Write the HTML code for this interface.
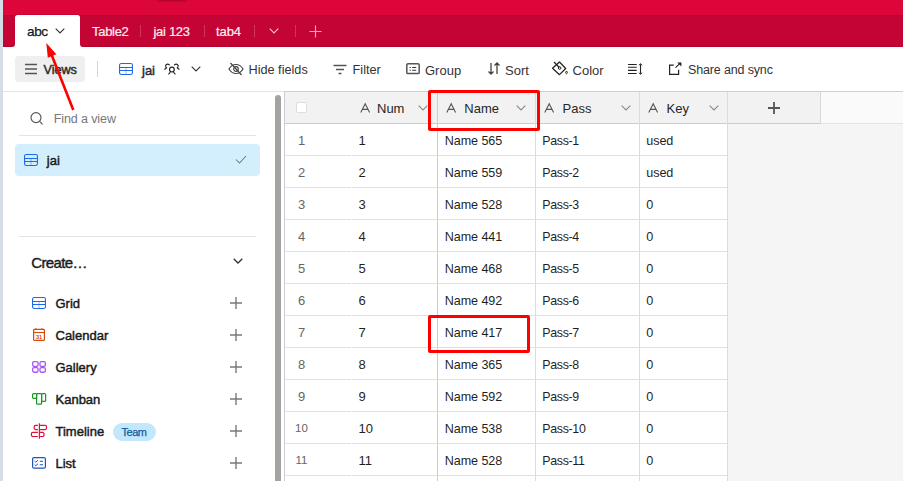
<!DOCTYPE html>
<html><head><meta charset="utf-8"><style>
html,body{margin:0;padding:0;}
body{width:903px;height:481px;overflow:hidden;position:relative;background:#fff;font-family:"Liberation Sans",sans-serif;}
.t{position:absolute;line-height:1;white-space:nowrap;}
.r{position:absolute;box-sizing:content-box;}
svg.r{overflow:visible;}
</style></head><body>
<div class="r" style="left:0px;top:0px;width:903px;height:15px;background:#dd063b;"></div>
<div class="r" style="left:0px;top:15px;width:903px;height:32px;background:#fff;"></div>
<div class="r" style="left:10px;top:15px;width:75px;height:8px;background:#c40434;"></div>
<div class="r" style="left:0px;top:15px;width:15px;height:32px;background:linear-gradient(#c40434 0,#c40434 30px,#b0002a 32px);border-radius:0 0 3px 0;"></div>
<div class="r" style="left:80px;top:15px;width:823px;height:32px;background:linear-gradient(#c40434 0,#c40434 30px,#b0002a 32px);border-radius:0 0 0 3px;"></div>
<div class="r" style="left:0px;top:0px;width:3px;height:481px;background:#d5dde6;"></div>
<div class="r" style="left:157px;top:-3px;width:30px;height:3.5px;background:#a8002c;border-radius:3px;filter:blur(0.8px);"></div>
<div class="r" style="left:3px;top:15px;width:900px;height:1px;background:rgba(150,0,30,0.25);"></div>
<div class="r" style="left:15px;top:14px;width:65px;height:1px;background:rgba(150,0,30,0.3);"></div>
<div class="r" style="left:15px;top:15px;width:65px;height:32px;background:#fff;border-radius:2.5px 2.5px 0 0;"></div>
<div class="t" style="left:27px;top:24.99px;font-size:13.6px;color:#0f172a;font-weight:400;letter-spacing:-0.4px;-webkit-text-stroke:0.25px #0f172a;">abc</div>
<svg class="r" style="left:55px;top:28px" width="10" height="6" viewBox="0 0 10 6"><path d="M0.7 0.7 L5 5 L9.3 0.7" fill="none" stroke="#333" stroke-width="1.1"/></svg>
<div class="t" style="left:92px;top:24.70px;font-size:13px;color:#fdeef2;font-weight:400;letter-spacing:-0.3px;-webkit-text-stroke:0.2px #fdeef2;">Table2</div>
<div class="r" style="left:140px;top:25px;width:1px;height:12px;background:rgba(255,255,255,0.2);"></div>
<div class="t" style="left:153.5px;top:24.70px;font-size:13px;color:#fdeef2;font-weight:400;letter-spacing:-0.3px;-webkit-text-stroke:0.2px #fdeef2;">jai 123</div>
<div class="r" style="left:204px;top:25px;width:1px;height:12px;background:rgba(255,255,255,0.2);"></div>
<div class="t" style="left:216px;top:24.70px;font-size:13px;color:#fdeef2;font-weight:400;letter-spacing:-0.1px;-webkit-text-stroke:0.2px #fdeef2;">tab4</div>
<div class="r" style="left:254px;top:25px;width:1px;height:12px;background:rgba(255,255,255,0.2);"></div>
<svg class="r" style="left:269px;top:28px" width="10" height="6" viewBox="0 0 10 6"><path d="M0.7 0.7 L5 5 L9.3 0.7" fill="none" stroke="#f5c6d2" stroke-width="1.1"/></svg>
<div class="r" style="left:295px;top:25px;width:1px;height:12px;background:rgba(255,255,255,0.2);"></div>
<svg class="r" style="left:309px;top:25px" width="13" height="13" viewBox="0 0 13 13"><path d="M6.5 0.5 V12.5 M0.5 6.5 H12.5" fill="none" stroke="#f0a9bb" stroke-width="1.2"/></svg>
<div class="r" style="left:3px;top:47px;width:900px;height:44px;background:#fff;"></div>
<div class="r" style="left:3px;top:91px;width:900px;height:1px;background:#e6e6e6;"></div>
<div class="r" style="left:15px;top:56px;width:70px;height:26px;background:#efefef;border-radius:4px;"></div>
<svg class="r" style="left:25px;top:63px" width="12" height="12" viewBox="0 0 12 12"><path d="M0 1.5 H12 M0 6 H12 M0 10.5 H12" stroke="#555" stroke-width="1.6"/></svg>
<div class="t" style="left:43.6px;top:63.95px;font-size:12.7px;color:#2a2a2a;font-weight:400;letter-spacing:-0.1px;-webkit-text-stroke:0.45px #2a2a2a;">Views</div>
<div class="r" style="left:97px;top:61px;width:1px;height:16px;background:#d4d4d4;"></div>
<svg class="r" style="left:119px;top:63px" width="14" height="12" viewBox="0 0 14 12"><rect x="0.55" y="0.55" width="12.9" height="10.9" rx="1.6" fill="none" stroke="#1f6ae6" stroke-width="1.1"/><path d="M0.6 4.5 H13.4 M0.6 7.5 H13.4" stroke="#1f6ae6" stroke-width="1.0"/><path d="M7 4.5 V11.4" stroke="#1f6ae6" stroke-width="0.8" opacity="0.55"/></svg>
<div class="t" style="left:142px;top:63.70px;font-size:13px;color:#2a2a2a;font-weight:400;letter-spacing:0px;-webkit-text-stroke:0.45px #2a2a2a;">jai</div>
<svg class="r" style="left:162px;top:60px" width="20" height="18" viewBox="0 0 20 18"><circle cx="9.9" cy="9.55" r="2.4" fill="none" stroke="#222" stroke-width="1.15"/><path d="M8.4 12.2 L6.4 14.4 M11.4 12.2 L13.4 14.4" fill="none" stroke="#222" stroke-width="1.1"/><path d="M7.5 5.4 C7.3 3.8 4.2 3.6 3.7 5.5 C3.5 6.5 4 7.5 4.5 7.9 L2.4 9.5" fill="none" stroke="#222" stroke-width="1.1"/><path d="M12.3 5.4 C12.5 3.8 15.6 3.6 16.1 5.5 C16.3 6.5 15.8 7.5 15.3 7.9 L17.4 9.5" fill="none" stroke="#222" stroke-width="1.1"/></svg>
<svg class="r" style="left:191px;top:66px" width="10" height="6" viewBox="0 0 10 6"><path d="M0.7 0.7 L5 5 L9.3 0.7" fill="none" stroke="#333" stroke-width="1.1"/></svg>
<svg class="r" style="left:228px;top:62px" width="16" height="14" viewBox="0 0 16 14"><path d="M1 7 C3 3.5 5.5 2.5 8 2.5 C10.5 2.5 13 3.5 15 7 C13 10.5 10.5 11.5 8 11.5 C5.5 11.5 3 10.5 1 7 Z" fill="none" stroke="#444" stroke-width="1.2"/><circle cx="8" cy="7" r="2.3" fill="none" stroke="#444" stroke-width="1.2"/><path d="M2.5 1 L13.5 13" stroke="#444" stroke-width="1.2"/></svg>
<div class="t" style="left:248.5px;top:63.95px;font-size:12.7px;color:#333;font-weight:400;letter-spacing:0px;">Hide fields</div>
<svg class="r" style="left:333px;top:64px" width="14" height="11" viewBox="0 0 14 11"><path d="M0.5 1.5 H13.5 M3 5.5 H11 M5.5 9.5 H8.5" stroke="#555" stroke-width="1.3"/></svg>
<div class="t" style="left:352.6px;top:63.95px;font-size:12.7px;color:#333;font-weight:400;letter-spacing:0px;">Filter</div>
<svg class="r" style="left:406px;top:63px" width="14" height="12" viewBox="0 0 14 12"><rect x="0.8" y="0.8" width="12.4" height="9.8" rx="1.2" fill="none" stroke="#555" stroke-width="1.5"/><path d="M3.6 4.5 H4.8 M6.2 4.5 H10.2 M3.6 7.3 H4.8 M6.2 7.3 H10.2" stroke="#333" stroke-width="1.1"/></svg>
<div class="t" style="left:425px;top:63.70px;font-size:13px;color:#333;font-weight:400;letter-spacing:0px;">Group</div>
<svg class="r" style="left:487px;top:62px" width="14" height="13" viewBox="0 0 14 13"><path d="M4 1 V12 M1.5 9.5 L4 12 L6.5 9.5 M10 12 V1 M7.5 3.5 L10 1 L12.5 3.5" fill="none" stroke="#444" stroke-width="1.3"/></svg>
<div class="t" style="left:505px;top:63.70px;font-size:13px;color:#333;font-weight:400;letter-spacing:0px;">Sort</div>
<svg class="r" style="left:552px;top:61px" width="16" height="15" viewBox="0 0 16 15"><path d="M7.5 1 L13.7 7.5 L7.5 13.7 L0.5 7.2 Z" fill="none" stroke="#222" stroke-width="1.2" stroke-linejoin="round"/><path d="M2 1 L7.3 6.5" stroke="#222" stroke-width="1.2"/><circle cx="7.6" cy="7" r="1.3" fill="none" stroke="#222" stroke-width="1"/><path d="M14.5 10 C13.5 11.3 13.2 12 14.5 12.8 C15.8 12 15.5 11.3 14.5 10 Z" fill="none" stroke="#222" stroke-width="1"/></svg>
<div class="t" style="left:572.6px;top:63.70px;font-size:13px;color:#333;font-weight:400;letter-spacing:0px;">Color</div>
<svg class="r" style="left:628px;top:63px" width="15" height="12" viewBox="0 0 15 12"><path d="M0 1.5 H8.7 M0 4.3 H8.7 M0 7.4 H8.7 M0 10.5 H8.7" stroke="#222" stroke-width="1.1"/><path d="M12.5 1.2 V10.8" stroke="#222" stroke-width="1.1"/><path d="M11 2.3 L12.5 0.6 L14 2.3 M11 9.7 L12.5 11.4 L14 9.7" fill="none" stroke="#222" stroke-width="1"/></svg>
<svg class="r" style="left:669px;top:62px" width="13" height="13" viewBox="0 0 13 13"><path d="M4.8 3.2 H0.6 V12.4 H9.6 V7.7" fill="none" stroke="#222" stroke-width="1.2"/><path d="M6.5 5.6 L11.6 0.9" fill="none" stroke="#222" stroke-width="1.1"/><path d="M8.2 0.4 H12.4 V4.6 Z" fill="#222"/></svg>
<div class="t" style="left:688px;top:64.02px;font-size:12.5px;color:#333;font-weight:400;letter-spacing:-0.15px;">Share and sync</div>
<svg class="r" style="left:30px;top:112px" width="14" height="13" viewBox="0 0 14 13"><circle cx="6" cy="5.6" r="5" fill="none" stroke="#555" stroke-width="1.15"/><path d="M9.6 9.3 L12.6 12.3" stroke="#555" stroke-width="1.2"/></svg>
<div class="t" style="left:53.7px;top:113.42px;font-size:12.5px;color:#777;font-weight:400;letter-spacing:-0.1px;">Find a view</div>
<div class="r" style="left:19px;top:135px;width:237px;height:1px;background:#e4e4e4;"></div>
<div class="r" style="left:15px;top:144px;width:245px;height:32px;background:#d3effd;border-radius:4px;"></div>
<svg class="r" style="left:24px;top:154px" width="14" height="12" viewBox="0 0 14 12"><rect x="0.55" y="0.55" width="12.9" height="10.9" rx="1.6" fill="none" stroke="#1f6ae6" stroke-width="1.1"/><path d="M0.6 4.5 H13.4 M0.6 7.5 H13.4" stroke="#1f6ae6" stroke-width="1.0"/><path d="M7 4.5 V11.4" stroke="#1f6ae6" stroke-width="0.8" opacity="0.55"/></svg>
<div class="t" style="left:46.8px;top:154.00px;font-size:13px;color:#1a1a1a;font-weight:400;letter-spacing:0px;-webkit-text-stroke:0.45px #1a1a1a;">jai</div>
<svg class="r" style="left:235px;top:155px" width="12" height="9" viewBox="0 0 12 9"><path d="M1 4.5 L4.5 8 L11 1" fill="none" stroke="#777" stroke-width="1.05"/></svg>
<div class="r" style="left:19px;top:236px;width:237px;height:1px;background:#e4e4e4;"></div>
<div class="t" style="left:31.3px;top:254.60px;font-size:15px;color:#1a1a1a;font-weight:400;letter-spacing:-0.65px;-webkit-text-stroke:0.4px #1a1a1a;">Create&hellip;</div>
<svg class="r" style="left:233px;top:258px" width="10" height="6" viewBox="0 0 10 6"><path d="M0.7 0.7 L5 5 L9.3 0.7" fill="none" stroke="#333" stroke-width="1.3"/></svg>
<div class="t" style="left:55.5px;top:297.10px;font-size:13px;color:#1a1a1a;font-weight:400;letter-spacing:0px;-webkit-text-stroke:0.45px #1a1a1a;">Grid</div>
<svg class="r" style="left:230px;top:297px" width="12" height="12" viewBox="0 0 12 12"><path d="M6 0 V12 M0 6 H12" stroke="#7a7a7a" stroke-width="1.4"/></svg>
<div class="t" style="left:55.5px;top:329.10px;font-size:13px;color:#1a1a1a;font-weight:400;letter-spacing:0px;-webkit-text-stroke:0.45px #1a1a1a;">Calendar</div>
<svg class="r" style="left:230px;top:329px" width="12" height="12" viewBox="0 0 12 12"><path d="M6 0 V12 M0 6 H12" stroke="#7a7a7a" stroke-width="1.4"/></svg>
<div class="t" style="left:55.5px;top:361.10px;font-size:13px;color:#1a1a1a;font-weight:400;letter-spacing:0px;-webkit-text-stroke:0.45px #1a1a1a;">Gallery</div>
<svg class="r" style="left:230px;top:361px" width="12" height="12" viewBox="0 0 12 12"><path d="M6 0 V12 M0 6 H12" stroke="#7a7a7a" stroke-width="1.4"/></svg>
<div class="t" style="left:55.5px;top:393.10px;font-size:13px;color:#1a1a1a;font-weight:400;letter-spacing:0px;-webkit-text-stroke:0.45px #1a1a1a;">Kanban</div>
<svg class="r" style="left:230px;top:393px" width="12" height="12" viewBox="0 0 12 12"><path d="M6 0 V12 M0 6 H12" stroke="#7a7a7a" stroke-width="1.4"/></svg>
<div class="t" style="left:55.5px;top:425.10px;font-size:13px;color:#1a1a1a;font-weight:400;letter-spacing:0px;-webkit-text-stroke:0.45px #1a1a1a;">Timeline</div>
<svg class="r" style="left:230px;top:425px" width="12" height="12" viewBox="0 0 12 12"><path d="M6 0 V12 M0 6 H12" stroke="#7a7a7a" stroke-width="1.4"/></svg>
<div class="t" style="left:55.5px;top:457.10px;font-size:13px;color:#1a1a1a;font-weight:400;letter-spacing:0px;-webkit-text-stroke:0.45px #1a1a1a;">List</div>
<svg class="r" style="left:230px;top:457px" width="12" height="12" viewBox="0 0 12 12"><path d="M6 0 V12 M0 6 H12" stroke="#7a7a7a" stroke-width="1.4"/></svg>
<svg class="r" style="left:32px;top:297px" width="14" height="12" viewBox="0 0 14 12"><rect x="0.55" y="0.55" width="12.9" height="10.9" rx="1.6" fill="none" stroke="#1f6ae6" stroke-width="1.1"/><path d="M0.6 4.5 H13.4 M0.6 7.5 H13.4" stroke="#1f6ae6" stroke-width="1.0"/><path d="M7 4.5 V11.4" stroke="#1f6ae6" stroke-width="0.8" opacity="0.55"/></svg>
<svg class="r" style="left:33px;top:328px" width="12" height="13" viewBox="0 0 12 13"><rect x="0.6" y="1.4" width="10.8" height="11" rx="0.8" fill="none" stroke="#d9480f" stroke-width="1.2"/><path d="M0.6 4.5 H11.4" stroke="#d9480f" stroke-width="1.1"/><path d="M3 0.3 V2 M9 0.3 V2" stroke="#d9480f" stroke-width="1.2"/><text x="6" y="10.8" font-size="5.6" text-anchor="middle" fill="#d9480f" font-family="Liberation Sans" font-weight="700">31</text></svg>
<svg class="r" style="left:32px;top:361px" width="14" height="12" viewBox="0 0 14 12"><g fill="none" stroke="#a855f7" stroke-width="1.3"><rect x="0.65" y="0.65" width="5.4" height="4.7" rx="1.4"/><rect x="7.95" y="0.65" width="5.4" height="4.7" rx="1.4"/><rect x="0.65" y="6.55" width="5.4" height="4.7" rx="1.4"/><rect x="7.95" y="6.55" width="5.4" height="4.7" rx="1.4"/></g></svg>
<svg class="r" style="left:32px;top:393px" width="14" height="12" viewBox="0 0 14 12"><rect x="0.6" y="0.6" width="4" height="4.8" rx="1" fill="none" stroke="#15991f" stroke-width="1.2"/><rect x="4.6" y="0.6" width="5" height="10.6" rx="1" fill="none" stroke="#15991f" stroke-width="1.2"/><rect x="9.6" y="0.6" width="4" height="7.8" rx="1" fill="none" stroke="#15991f" stroke-width="1.2"/></svg>
<svg class="r" style="left:31px;top:423px" width="16" height="16" viewBox="0 0 16 16"><g fill="none" stroke="#e0103f" stroke-width="1.2"><path d="M8.4 0.2 V15.8"/><path d="M6.9 2.3 H4.6 A1.4 1.4 0 0 0 3.2 3.7 V5.2 A1.4 1.4 0 0 0 4.6 6.6 H6.9"/><path d="M8.4 2.3 H14.1 A1.4 1.4 0 0 1 15.5 3.7 V5.2 A1.4 1.4 0 0 1 14.1 6.6 H8.4"/><path d="M6.9 9.4 H1.8 A1.4 1.4 0 0 0 0.4 10.8 V12.1 A1.4 1.4 0 0 0 1.8 13.5 H6.9"/><path d="M8.4 9.4 H11.6 A1.4 1.4 0 0 1 13 10.8 V12.1 A1.4 1.4 0 0 1 11.6 13.5 H8.4"/></g></svg>
<div class="r" style="left:113px;top:423px;width:43px;height:18px;border-radius:9px;background:#c3e8fd;"></div>
<div class="t" style="left:121.6px;top:426.69px;font-size:11px;color:#0f5c9c;font-weight:400;letter-spacing:-0.5px;-webkit-text-stroke:0.25px #0f5c9c;">Team</div>
<svg class="r" style="left:32px;top:457px" width="14" height="12" viewBox="0 0 14 12"><rect x="0.6" y="0.6" width="12.8" height="10.6" rx="1.5" fill="none" stroke="#1f56b3" stroke-width="1.2"/><path d="M2.6 4.2 L3.8 5.2 L6 3.2 M2.6 7.7 L3.8 8.7 L6 6.7" fill="none" stroke="#1f56b3" stroke-width="1"/><path d="M7.8 4.3 H11 M7.8 7.8 H11" stroke="#1f56b3" stroke-width="1.1"/></svg>
<div class="r" style="left:275px;top:95px;width:6px;height:386px;background:#a3a3a3;border-radius:3px 3px 0 0;"></div>
<div class="r" style="left:284px;top:91px;width:619px;height:390px;background:#f5f5f5;"></div>
<div class="r" style="left:284px;top:92px;width:443px;height:32px;background:#f2f2f2;"></div>
<div class="r" style="left:727px;top:92px;width:94px;height:32px;background:#f2f2f2;"></div>
<div class="r" style="left:821px;top:92px;width:82px;height:32px;background:#fafafa;"></div>
<div class="r" style="left:284px;top:91px;width:619px;height:1px;background:#cfcfcf;"></div>
<div class="r" style="left:284px;top:91px;width:1px;height:390px;background:#c9cdd3;"></div>
<div class="r" style="left:285px;top:124px;width:442px;height:357px;background:#fff;"></div>
<div class="r" style="left:285px;top:123px;width:536px;height:1px;background:#cdcdcd;"></div>
<div class="r" style="left:821px;top:123px;width:82px;height:1px;background:#e1e4e8;"></div>
<div class="r" style="left:535px;top:92px;width:1px;height:389px;background:#d9dde2;"></div>
<div class="r" style="left:639px;top:92px;width:1px;height:389px;background:#d9dde2;"></div>
<div class="r" style="left:727px;top:92px;width:1px;height:389px;background:#d9dde2;"></div>
<div class="r" style="left:437px;top:92px;width:1px;height:389px;background:#cdcdcd;"></div>
<div class="r" style="left:820px;top:92px;width:1px;height:32px;background:#d6dade;"></div>
<div class="r" style="left:285px;top:155px;width:442px;height:1px;background:#dde1e6;"></div>
<div class="r" style="left:351px;top:155px;width:1px;height:1px;background:#fff;"></div>
<div class="r" style="left:285px;top:187px;width:442px;height:1px;background:#dde1e6;"></div>
<div class="r" style="left:351px;top:187px;width:1px;height:1px;background:#fff;"></div>
<div class="r" style="left:285px;top:219px;width:442px;height:1px;background:#dde1e6;"></div>
<div class="r" style="left:351px;top:219px;width:1px;height:1px;background:#fff;"></div>
<div class="r" style="left:285px;top:251px;width:442px;height:1px;background:#dde1e6;"></div>
<div class="r" style="left:351px;top:251px;width:1px;height:1px;background:#fff;"></div>
<div class="r" style="left:285px;top:283px;width:442px;height:1px;background:#dde1e6;"></div>
<div class="r" style="left:351px;top:283px;width:1px;height:1px;background:#fff;"></div>
<div class="r" style="left:285px;top:315px;width:442px;height:1px;background:#dde1e6;"></div>
<div class="r" style="left:351px;top:315px;width:1px;height:1px;background:#fff;"></div>
<div class="r" style="left:285px;top:347px;width:442px;height:1px;background:#dde1e6;"></div>
<div class="r" style="left:351px;top:347px;width:1px;height:1px;background:#fff;"></div>
<div class="r" style="left:285px;top:379px;width:442px;height:1px;background:#dde1e6;"></div>
<div class="r" style="left:351px;top:379px;width:1px;height:1px;background:#fff;"></div>
<div class="r" style="left:285px;top:411px;width:442px;height:1px;background:#dde1e6;"></div>
<div class="r" style="left:351px;top:411px;width:1px;height:1px;background:#fff;"></div>
<div class="r" style="left:285px;top:443px;width:442px;height:1px;background:#dde1e6;"></div>
<div class="r" style="left:351px;top:443px;width:1px;height:1px;background:#fff;"></div>
<div class="r" style="left:285px;top:475px;width:442px;height:1px;background:#dde1e6;"></div>
<div class="r" style="left:351px;top:475px;width:1px;height:1px;background:#fff;"></div>
<div class="r" style="left:296px;top:102px;width:9px;height:9px;border:1px solid #dedede;border-radius:2px;background:#fff;"></div>
<svg class="r" style="left:360px;top:103px" width="11" height="10" viewBox="0 0 11 10"><path d="M0.8 9.5 L5.2 0.8 L9.6 9.5 M2.4 6.4 H8" fill="none" stroke="#555" stroke-width="1.1"/></svg>
<div class="t" style="left:377px;top:101.80px;font-size:13px;color:#262626;font-weight:400;letter-spacing:0px;">Num</div>
<svg class="r" style="left:418px;top:105px" width="10" height="6" viewBox="0 0 10 6"><path d="M0.7 0.7 L5 5 L9.3 0.7" fill="none" stroke="#888" stroke-width="1.1"/></svg>
<svg class="r" style="left:446px;top:103px" width="11" height="10" viewBox="0 0 11 10"><path d="M0.8 9.5 L5.2 0.8 L9.6 9.5 M2.4 6.4 H8" fill="none" stroke="#555" stroke-width="1.1"/></svg>
<div class="t" style="left:464.3px;top:101.80px;font-size:13px;color:#262626;font-weight:400;letter-spacing:0px;">Name</div>
<svg class="r" style="left:516px;top:105px" width="10" height="6" viewBox="0 0 10 6"><path d="M0.7 0.7 L5 5 L9.3 0.7" fill="none" stroke="#888" stroke-width="1.1"/></svg>
<svg class="r" style="left:544px;top:103px" width="11" height="10" viewBox="0 0 11 10"><path d="M0.8 9.5 L5.2 0.8 L9.6 9.5 M2.4 6.4 H8" fill="none" stroke="#555" stroke-width="1.1"/></svg>
<div class="t" style="left:562.6px;top:101.80px;font-size:13px;color:#262626;font-weight:400;letter-spacing:0px;">Pass</div>
<svg class="r" style="left:620.5px;top:105px" width="10" height="6" viewBox="0 0 10 6"><path d="M0.7 0.7 L5 5 L9.3 0.7" fill="none" stroke="#888" stroke-width="1.1"/></svg>
<svg class="r" style="left:648px;top:103px" width="11" height="10" viewBox="0 0 11 10"><path d="M0.8 9.5 L5.2 0.8 L9.6 9.5 M2.4 6.4 H8" fill="none" stroke="#555" stroke-width="1.1"/></svg>
<div class="t" style="left:666.5px;top:101.80px;font-size:13px;color:#262626;font-weight:400;letter-spacing:0px;">Key</div>
<svg class="r" style="left:708.5px;top:105px" width="10" height="6" viewBox="0 0 10 6"><path d="M0.7 0.7 L5 5 L9.3 0.7" fill="none" stroke="#888" stroke-width="1.1"/></svg>
<svg class="r" style="left:768px;top:102px" width="12" height="12" viewBox="0 0 12 12"><path d="M6 0 V12 M0 6 H12" stroke="#555" stroke-width="1.8"/></svg>
<div class="t" style="left:286px;width:31px;text-align:center;top:134.20px;font-size:13px;color:#666;">1</div>
<div class="t" style="left:358.6px;top:134.20px;font-size:13px;color:#1f1f1f;font-weight:400;letter-spacing:0px;">1</div>
<div class="t" style="left:444.8px;top:134.53px;font-size:12.6px;color:#1f1f1f;font-weight:400;letter-spacing:-0.1px;">Name 565</div>
<div class="t" style="left:542.2px;top:134.70px;font-size:12.4px;color:#1f1f1f;font-weight:400;letter-spacing:-0.3px;">Pass-1</div>
<div class="t" style="left:646.3px;top:134.53px;font-size:12.6px;color:#1f1f1f;font-weight:400;letter-spacing:-0.1px;">used</div>
<div class="t" style="left:286px;width:31px;text-align:center;top:166.20px;font-size:13px;color:#666;">2</div>
<div class="t" style="left:358.6px;top:166.20px;font-size:13px;color:#1f1f1f;font-weight:400;letter-spacing:0px;">2</div>
<div class="t" style="left:444.8px;top:166.53px;font-size:12.6px;color:#1f1f1f;font-weight:400;letter-spacing:-0.1px;">Name 559</div>
<div class="t" style="left:542.2px;top:166.70px;font-size:12.4px;color:#1f1f1f;font-weight:400;letter-spacing:-0.3px;">Pass-2</div>
<div class="t" style="left:646.3px;top:166.53px;font-size:12.6px;color:#1f1f1f;font-weight:400;letter-spacing:-0.1px;">used</div>
<div class="t" style="left:286px;width:31px;text-align:center;top:198.20px;font-size:13px;color:#666;">3</div>
<div class="t" style="left:358.6px;top:198.20px;font-size:13px;color:#1f1f1f;font-weight:400;letter-spacing:0px;">3</div>
<div class="t" style="left:444.8px;top:198.53px;font-size:12.6px;color:#1f1f1f;font-weight:400;letter-spacing:-0.1px;">Name 528</div>
<div class="t" style="left:542.2px;top:198.70px;font-size:12.4px;color:#1f1f1f;font-weight:400;letter-spacing:-0.3px;">Pass-3</div>
<div class="t" style="left:646.3px;top:198.53px;font-size:12.6px;color:#1f1f1f;font-weight:400;letter-spacing:-0.1px;">0</div>
<div class="t" style="left:286px;width:31px;text-align:center;top:230.20px;font-size:13px;color:#666;">4</div>
<div class="t" style="left:358.6px;top:230.20px;font-size:13px;color:#1f1f1f;font-weight:400;letter-spacing:0px;">4</div>
<div class="t" style="left:444.8px;top:230.53px;font-size:12.6px;color:#1f1f1f;font-weight:400;letter-spacing:-0.1px;">Name 441</div>
<div class="t" style="left:542.2px;top:230.70px;font-size:12.4px;color:#1f1f1f;font-weight:400;letter-spacing:-0.3px;">Pass-4</div>
<div class="t" style="left:646.3px;top:230.53px;font-size:12.6px;color:#1f1f1f;font-weight:400;letter-spacing:-0.1px;">0</div>
<div class="t" style="left:286px;width:31px;text-align:center;top:262.20px;font-size:13px;color:#666;">5</div>
<div class="t" style="left:358.6px;top:262.20px;font-size:13px;color:#1f1f1f;font-weight:400;letter-spacing:0px;">5</div>
<div class="t" style="left:444.8px;top:262.53px;font-size:12.6px;color:#1f1f1f;font-weight:400;letter-spacing:-0.1px;">Name 468</div>
<div class="t" style="left:542.2px;top:262.70px;font-size:12.4px;color:#1f1f1f;font-weight:400;letter-spacing:-0.3px;">Pass-5</div>
<div class="t" style="left:646.3px;top:262.53px;font-size:12.6px;color:#1f1f1f;font-weight:400;letter-spacing:-0.1px;">0</div>
<div class="t" style="left:286px;width:31px;text-align:center;top:294.20px;font-size:13px;color:#666;">6</div>
<div class="t" style="left:358.6px;top:294.20px;font-size:13px;color:#1f1f1f;font-weight:400;letter-spacing:0px;">6</div>
<div class="t" style="left:444.8px;top:294.53px;font-size:12.6px;color:#1f1f1f;font-weight:400;letter-spacing:-0.1px;">Name 492</div>
<div class="t" style="left:542.2px;top:294.70px;font-size:12.4px;color:#1f1f1f;font-weight:400;letter-spacing:-0.3px;">Pass-6</div>
<div class="t" style="left:646.3px;top:294.53px;font-size:12.6px;color:#1f1f1f;font-weight:400;letter-spacing:-0.1px;">0</div>
<div class="t" style="left:286px;width:31px;text-align:center;top:326.20px;font-size:13px;color:#666;">7</div>
<div class="t" style="left:358.6px;top:326.20px;font-size:13px;color:#1f1f1f;font-weight:400;letter-spacing:0px;">7</div>
<div class="t" style="left:444.8px;top:326.53px;font-size:12.6px;color:#1f1f1f;font-weight:400;letter-spacing:-0.1px;">Name 417</div>
<div class="t" style="left:542.2px;top:326.70px;font-size:12.4px;color:#1f1f1f;font-weight:400;letter-spacing:-0.3px;">Pass-7</div>
<div class="t" style="left:646.3px;top:326.53px;font-size:12.6px;color:#1f1f1f;font-weight:400;letter-spacing:-0.1px;">0</div>
<div class="t" style="left:286px;width:31px;text-align:center;top:358.20px;font-size:13px;color:#666;">8</div>
<div class="t" style="left:358.6px;top:358.20px;font-size:13px;color:#1f1f1f;font-weight:400;letter-spacing:0px;">8</div>
<div class="t" style="left:444.8px;top:358.53px;font-size:12.6px;color:#1f1f1f;font-weight:400;letter-spacing:-0.1px;">Name 365</div>
<div class="t" style="left:542.2px;top:358.70px;font-size:12.4px;color:#1f1f1f;font-weight:400;letter-spacing:-0.3px;">Pass-8</div>
<div class="t" style="left:646.3px;top:358.53px;font-size:12.6px;color:#1f1f1f;font-weight:400;letter-spacing:-0.1px;">0</div>
<div class="t" style="left:286px;width:31px;text-align:center;top:390.20px;font-size:13px;color:#666;">9</div>
<div class="t" style="left:358.6px;top:390.20px;font-size:13px;color:#1f1f1f;font-weight:400;letter-spacing:0px;">9</div>
<div class="t" style="left:444.8px;top:390.53px;font-size:12.6px;color:#1f1f1f;font-weight:400;letter-spacing:-0.1px;">Name 592</div>
<div class="t" style="left:542.2px;top:390.70px;font-size:12.4px;color:#1f1f1f;font-weight:400;letter-spacing:-0.3px;">Pass-9</div>
<div class="t" style="left:646.3px;top:390.53px;font-size:12.6px;color:#1f1f1f;font-weight:400;letter-spacing:-0.1px;">0</div>
<div class="t" style="left:286px;width:31px;text-align:center;top:423.00px;font-size:11.5px;color:#666;">10</div>
<div class="t" style="left:358.6px;top:422.20px;font-size:13px;color:#1f1f1f;font-weight:400;letter-spacing:0px;">10</div>
<div class="t" style="left:444.8px;top:422.53px;font-size:12.6px;color:#1f1f1f;font-weight:400;letter-spacing:-0.1px;">Name 538</div>
<div class="t" style="left:542.2px;top:422.70px;font-size:12.4px;color:#1f1f1f;font-weight:400;letter-spacing:-0.3px;">Pass-10</div>
<div class="t" style="left:646.3px;top:422.53px;font-size:12.6px;color:#1f1f1f;font-weight:400;letter-spacing:-0.1px;">0</div>
<div class="t" style="left:286px;width:31px;text-align:center;top:455.00px;font-size:11.5px;color:#666;">11</div>
<div class="t" style="left:358.6px;top:454.20px;font-size:13px;color:#1f1f1f;font-weight:400;letter-spacing:0px;">11</div>
<div class="t" style="left:444.8px;top:454.53px;font-size:12.6px;color:#1f1f1f;font-weight:400;letter-spacing:-0.1px;">Name 528</div>
<div class="t" style="left:542.2px;top:454.70px;font-size:12.4px;color:#1f1f1f;font-weight:400;letter-spacing:-0.3px;">Pass-11</div>
<div class="t" style="left:646.3px;top:454.53px;font-size:12.6px;color:#1f1f1f;font-weight:400;letter-spacing:-0.1px;">0</div>
<div class="r" style="left:428px;top:90px;width:106px;height:35px;border:3px solid #f00;border-radius:2px;"></div>
<div class="r" style="left:428px;top:315px;width:96px;height:32px;border:3px solid #f00;border-radius:2px;"></div>
<svg class="r" style="left:0;top:0" width="903" height="481" viewBox="0 0 903 481"><path d="M73.3 110 L50.5 52" stroke="#f00" stroke-width="2.6"/><path d="M46.3 43 L47.8 57.8 L56.3 54.3 Z" fill="#f00"/></svg>
</body></html>
